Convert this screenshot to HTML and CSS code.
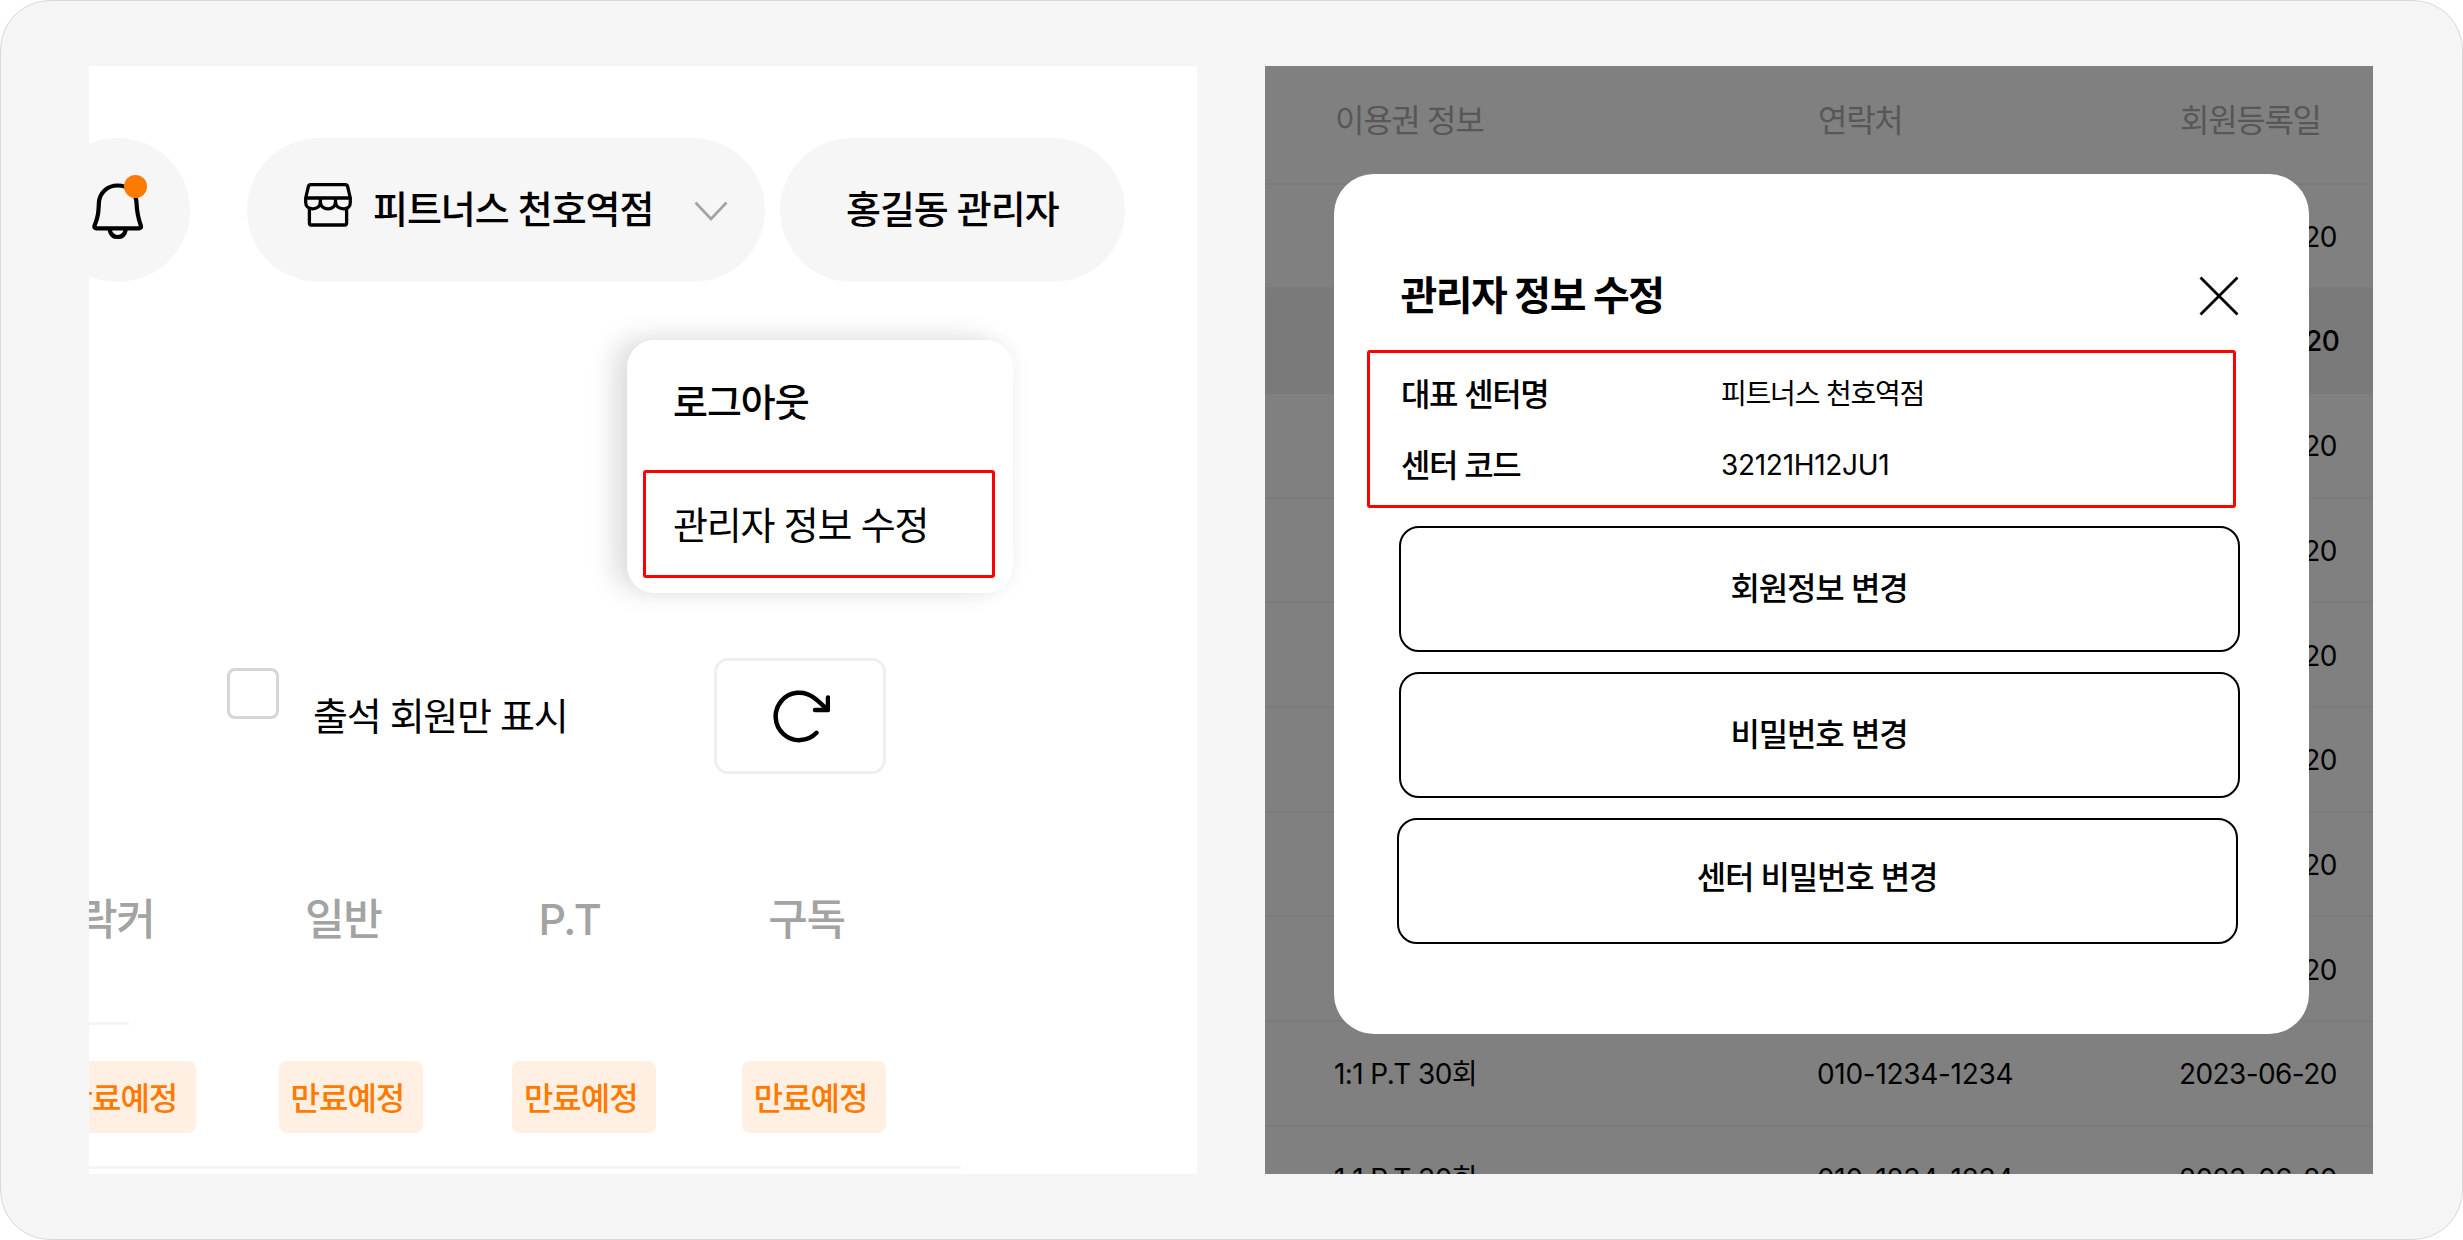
FILE: index.html
```html
<!DOCTYPE html>
<html lang="ko">
<head>
    <meta charset="UTF-8">
    <meta name="viewport" content="width=device-width, initial-scale=1.0">
    <title>관리자 정보 수정</title>
    <link rel="stylesheet" href="styles.css">
</head>
<body>
<div class="frame">

    <div class="panel">
        <div class="topbar">
            <div class="bell">
                <svg class="bell-icon" viewBox="0 0 56 60" fill="none" stroke="#000" stroke-width="4.2" stroke-linejoin="round">
                    <path d="M27.7 4.5C17 4.5 9.6 12 8.9 21.500C8.500 31 8.200 36 4.600 44.500C4 46.300 4.500 47.300 6.200 47.300H49.200C50.900 47.300 51.400 46.300 50.800 44.500C47.400 35 46.800 30 46.500 21.500C45.800 12 38.400 4.500 27.700 4.500Z"/>
                    <path d="M19.600 48.500C20.500 53.300 23.600 56 27.700 56S34.900 53.300 35.800 48.500"/>
                </svg>
                <span class="bell-dot"></span>
            </div>
            <div class="pill center-pill">
                <svg class="store-icon" viewBox="0 0 50 46" fill="none" stroke="#000" stroke-width="3.300" stroke-linejoin="round">
                    <path d="M7.800 2.700H42.200C43.600 2.700 44.300 3.200 44.600 4.400L47.300 16V20.500C47.300 24.300 44.800 26.800 40.800 26.800C36.200 26.800 32.500 24.300 32.500 20C32.500 24.300 29.200 26.800 25 26.800S17.400 24.300 17.400 20C17.400 24.300 13.800 26.800 9.600 26.800C5.600 26.800 2.700 24.300 2.700 20.500V16L5.400 4.400C5.700 3.200 6.400 2.700 7.800 2.700Z"/>
                    <path d="M2.700 16H47.300M17.400 16V21M32.500 16V21M6.400 25V41C6.400 42.300 7 43 8.300 43H41.700C43 43 43.600 42.300 43.600 41V25"/>
                </svg>
                <span class="center-name">피트너스 천호역점</span>
                <svg class="chevron" viewBox="0 0 34 20" fill="none" stroke="#a3a3a3" stroke-width="2.600">
                    <path d="M1.500 1.500L17 18L32.500 1.500"/>
                </svg>
            </div>
            <div class="pill user-pill">홍길동 관리자</div>

            <div class="menu">
                <div class="menu-item logout">로그아웃</div>
                <div class="menu-item menu-edit">관리자 정보 수정</div>
            </div>
        </div>

        <div class="filters">
            <span class="checkbox"></span>
            <span class="filter-text">출석 회원만 표시</span>
            <div class="refresh">
                <svg class="refresh-icon" viewBox="0 0 58 54" fill="none" stroke="#000" stroke-width="4.500" stroke-linecap="round" stroke-linejoin="round">
                    <path d="M44.500 43.800A23.700 23.700 0 1 1 42 8.800Q47 12.500 55 20.500M56 8.500V21H43"/>
                </svg>
            </div>
        </div>

        <div class="status-head">
            <span>락커</span>
            <span>일반</span>
            <span>P.T</span>
            <span>구독</span>
        </div>
        <div class="status-line"></div>
        <div class="status-row">
            <span class="badge">만료예정</span>
            <span class="badge">만료예정</span>
            <span class="badge">만료예정</span>
            <span class="badge">만료예정</span>
        </div>
    </div>

    <div class="panel members">
        <div class="member-row member-head"><span>이용권 정보</span><span>연락처</span><span>회원등록일</span></div>
        <div class="member-row"><span>1:1 P.T 30회</span><span class="phone">010-1234-1234</span><span>2023-06-20</span></div>
        <div class="member-row selected"><span>1:1 P.T 30회</span><span class="phone">010-1234-1234</span><span>2023-06-20</span></div>
        <div class="member-row"><span>1:1 P.T 30회</span><span class="phone">010-1234-1234</span><span>2023-06-20</span></div>
        <div class="member-row"><span>1:1 P.T 30회</span><span class="phone">010-1234-1234</span><span>2023-06-20</span></div>
        <div class="member-row"><span>1:1 P.T 30회</span><span class="phone">010-1234-1234</span><span>2023-06-20</span></div>
        <div class="member-row"><span>1:1 P.T 30회</span><span class="phone">010-1234-1234</span><span>2023-06-20</span></div>
        <div class="member-row"><span>1:1 P.T 30회</span><span class="phone">010-1234-1234</span><span>2023-06-20</span></div>
        <div class="member-row"><span>1:1 P.T 30회</span><span class="phone">010-1234-1234</span><span>2023-06-20</span></div>
        <div class="member-row"><span>1:1 P.T 30회</span><span class="phone">010-1234-1234</span><span>2023-06-20</span></div>
        <div class="member-row"><span>1:1 P.T 30회</span><span class="phone">010-1234-1234</span><span>2023-06-20</span></div>

        <div class="modal">
            <div class="modal-head">
                <span class="modal-title">관리자 정보 수정</span>
                <svg class="close-icon" viewBox="0 0 40 40" fill="none" stroke="#000" stroke-width="2.800">
                    <path d="M1.500 1.500L38.500 38.500M38.500 1.500L1.500 38.500"/>
                </svg>
            </div>
            <div class="info">
                <div class="info-row">
                    <span class="info-label">대표 센터명</span>
                    <span class="info-value">피트너스 천호역점</span>
                </div>
                <div class="info-row">
                    <span class="info-label">센터 코드</span>
                    <span class="info-value code">32121H12JU1</span>
                </div>
            </div>
            <button class="modal-btn">회원정보 변경</button>
            <button class="modal-btn">비밀번호 변경</button>
            <button class="modal-btn center-btn">센터 비밀번호 변경</button>
        </div>
    </div>

</div>
</body>
</html>
```
FILE: styles.css
```css
*
{
    box-sizing:border-box;
}
body
{
    margin:0;
    background-color:white;
    color:black;
    font-family:Inter, "Noto Sans CJK KR", sans-serif;
    line-height:1.2;
}
.frame
{
    display:flex;
    gap:68px;
    width:2463px;
    height:1240px;
    padding:65px 88px;
    background-color:#f5f5f5;
    border:1px solid #d9d9d9;
    border-radius:50px;
}
.panel
{
    position:relative;
    width:1108px;
    height:1108px;
    background-color:white;
    overflow:hidden;
    white-space:nowrap;
}

/* top bar */
.topbar
{
    position:relative;
    display:flex;
    margin-top:71.5px;
    margin-left:-43px;
    height:144px;
    font-size:38px;
    font-weight:500;
    letter-spacing:-1.050px;
}
.bell
{
    position:relative;
    display:flex;
    width:144px;
    border-radius:50%;
    background-color:#f6f6f6;
    padding:43px 0 0 44px;
}
.bell-icon
{
    width:56px;
    height:60px;
}
.bell-dot
{
    position:absolute;
    left:77.500px;
    top:37.500px;
    width:23px;
    height:23px;
    border-radius:50%;
    background-color:#ff7a00;
}
.pill
{
    display:flex;
    align-items:center;
    height:144px;
    border-radius:72px;
    background-color:#f6f6f6;
}
.center-pill
{
    width:518px;
    margin-left:57px;
    padding-left:56px;
}
.store-icon
{
    width:50px;
    height:46px;
    margin-top:-9px;
}
.center-name
{
    width:320px;
    margin-left:20px;
}
.chevron
{
    width:34px;
    height:20px;
    margin-top:3px;
    margin-left:1px;
}
.user-pill
{
    width:345px;
    margin-left:15px;
    padding-left:66px;
}

/* user menu */
.menu
{
    position:absolute;
    left:581px;
    top:202px;
    width:386px;
    height:253px;
    padding:16px 17px;
    border-radius:27px;
    background-color:white;
    box-shadow:-14px -2px 26px rgba(0,0,0,0.13), 4px 0 18px rgba(0,0,0,0.03);
}
.menu-item
{
    display:flex;
    align-items:center;
    height:107px;
    padding-left:29px;
}
.logout
{
    height:94px;
    padding-top:1px;
    margin-bottom:20px;
}
.menu-edit
{
    width:352px;
    height:108px;
    margin-left:-1px;
    padding-left:27px;
    padding-top:5px;
    border:3px solid #ff0000;
    border-radius:3px;
    font-weight:400;
    letter-spacing:-1.200px;
}

/* attendance filter */
.filters
{
    display:flex;
    height:116px;
    margin-top:376px;
    padding-left:138px;
    font-size:38px;
    letter-spacing:-1.300px;
}
.checkbox
{
    width:52px;
    height:51px;
    margin-top:10px;
    border:3px solid #d6d6d6;
    border-radius:8px;
}
.filter-text
{
    width:401px;
    margin-left:34px;
    line-height:116px;
}
.refresh
{
    display:flex;
    width:172px;
    height:116px;
    padding:28.500px 0 0 55px;
    border:3px solid #efefef;
    border-radius:14px;
}
.refresh-icon
{
    width:58px;
    height:54px;
}

/* status table */
.status-head,.status-row
{
    display:grid;
    grid-template-columns:227px 233.400px 229.800px 144px;
    margin-left:-37px;
}
.status-head
{
    margin-top:110px;
    padding-left:26px;
    height:70px;
    line-height:70px;
    font-size:43px;
    font-weight:500;
    letter-spacing:-1.200px;
    color:#a3a3a3;
}
.status-line
{
    width:40px;
    height:3px;
    margin-top:68px;
    background-color:#f5f5f5;
}
.status-row
{
    width:909px;
    height:144px;
    padding-top:36px;
    border-bottom:3px solid #f5f5f5;
}
.badge
{
    width:143.500px;
    height:72px;
    line-height:75px;
    padding-left:11.500px;
    border-radius:8px;
    background-color:#fff0e3;
    color:#ff7a00;
    font-size:32px;
    font-weight:500;
    letter-spacing:-1px;
}

/* member table, dimmed under the modal */
.members
{
    background-color:#808080;
}
.member-row
{
    display:grid;
    grid-template-columns:483px 362px 263px;
    align-items:center;
    height:104.700px;
    padding:3.500px 0 0 69px;
    border-bottom:2px solid #7b7b7b;
    font-size:28px;
    letter-spacing:-0.600px;
}
.member-head
{
    height:118.500px;
    padding-top:0;
    padding-bottom:6px;
    padding-left:70px;
    font-size:32px;
    letter-spacing:-1.300px;
    color:#575757;
}
.phone
{
    letter-spacing:-0.300px;
}
.selected
{
    background-color:#7a7a7a;
    font-weight:500;
}

/* modal */
.modal
{
    position:absolute;
    left:68.500px;
    top:108px;
    width:975px;
    height:860px;
    padding:95px 69px 0 65px;
    border-radius:40px;
    background-color:white;
}
.modal-head
{
    display:flex;
    justify-content:space-between;
    align-items:center;
    height:54px;
    padding-left:2px;
    padding-right:1px;
}
.modal-title
{
    font-size:40px;
    font-weight:700;
    letter-spacing:-1.500px;
}
.close-icon
{
    width:40px;
    height:40px;
}
.info
{
    width:869px;
    height:158px;
    margin-left:-31.500px;
    margin-top:27px;
    margin-bottom:18px;
    padding:6px 0 0 31px;
    border:3px solid #ff0000;
    border-radius:3px;
}
.info-row
{
    display:flex;
    align-items:center;
    height:71.500px;
}
.info-label
{
    width:320px;
    font-size:32px;
    font-weight:500;
    letter-spacing:-1.400px;
}
.info-value
{
    font-size:28px;
    letter-spacing:-1.200px;
}
.code
{
    letter-spacing:-0.300px;
}
.modal-btn
{
    display:block;
    width:841px;
    height:126px;
    margin:0 0 20px 0;
    padding:0;
    border:2px solid black;
    border-radius:20px;
    background-color:white;
    color:black;
    font-family:inherit;
    font-size:32px;
    font-weight:500;
    line-height:38px;
    letter-spacing:-1.200px;
}
.center-btn
{
    margin-left:-2px;
    padding-bottom:7px;
}
```
